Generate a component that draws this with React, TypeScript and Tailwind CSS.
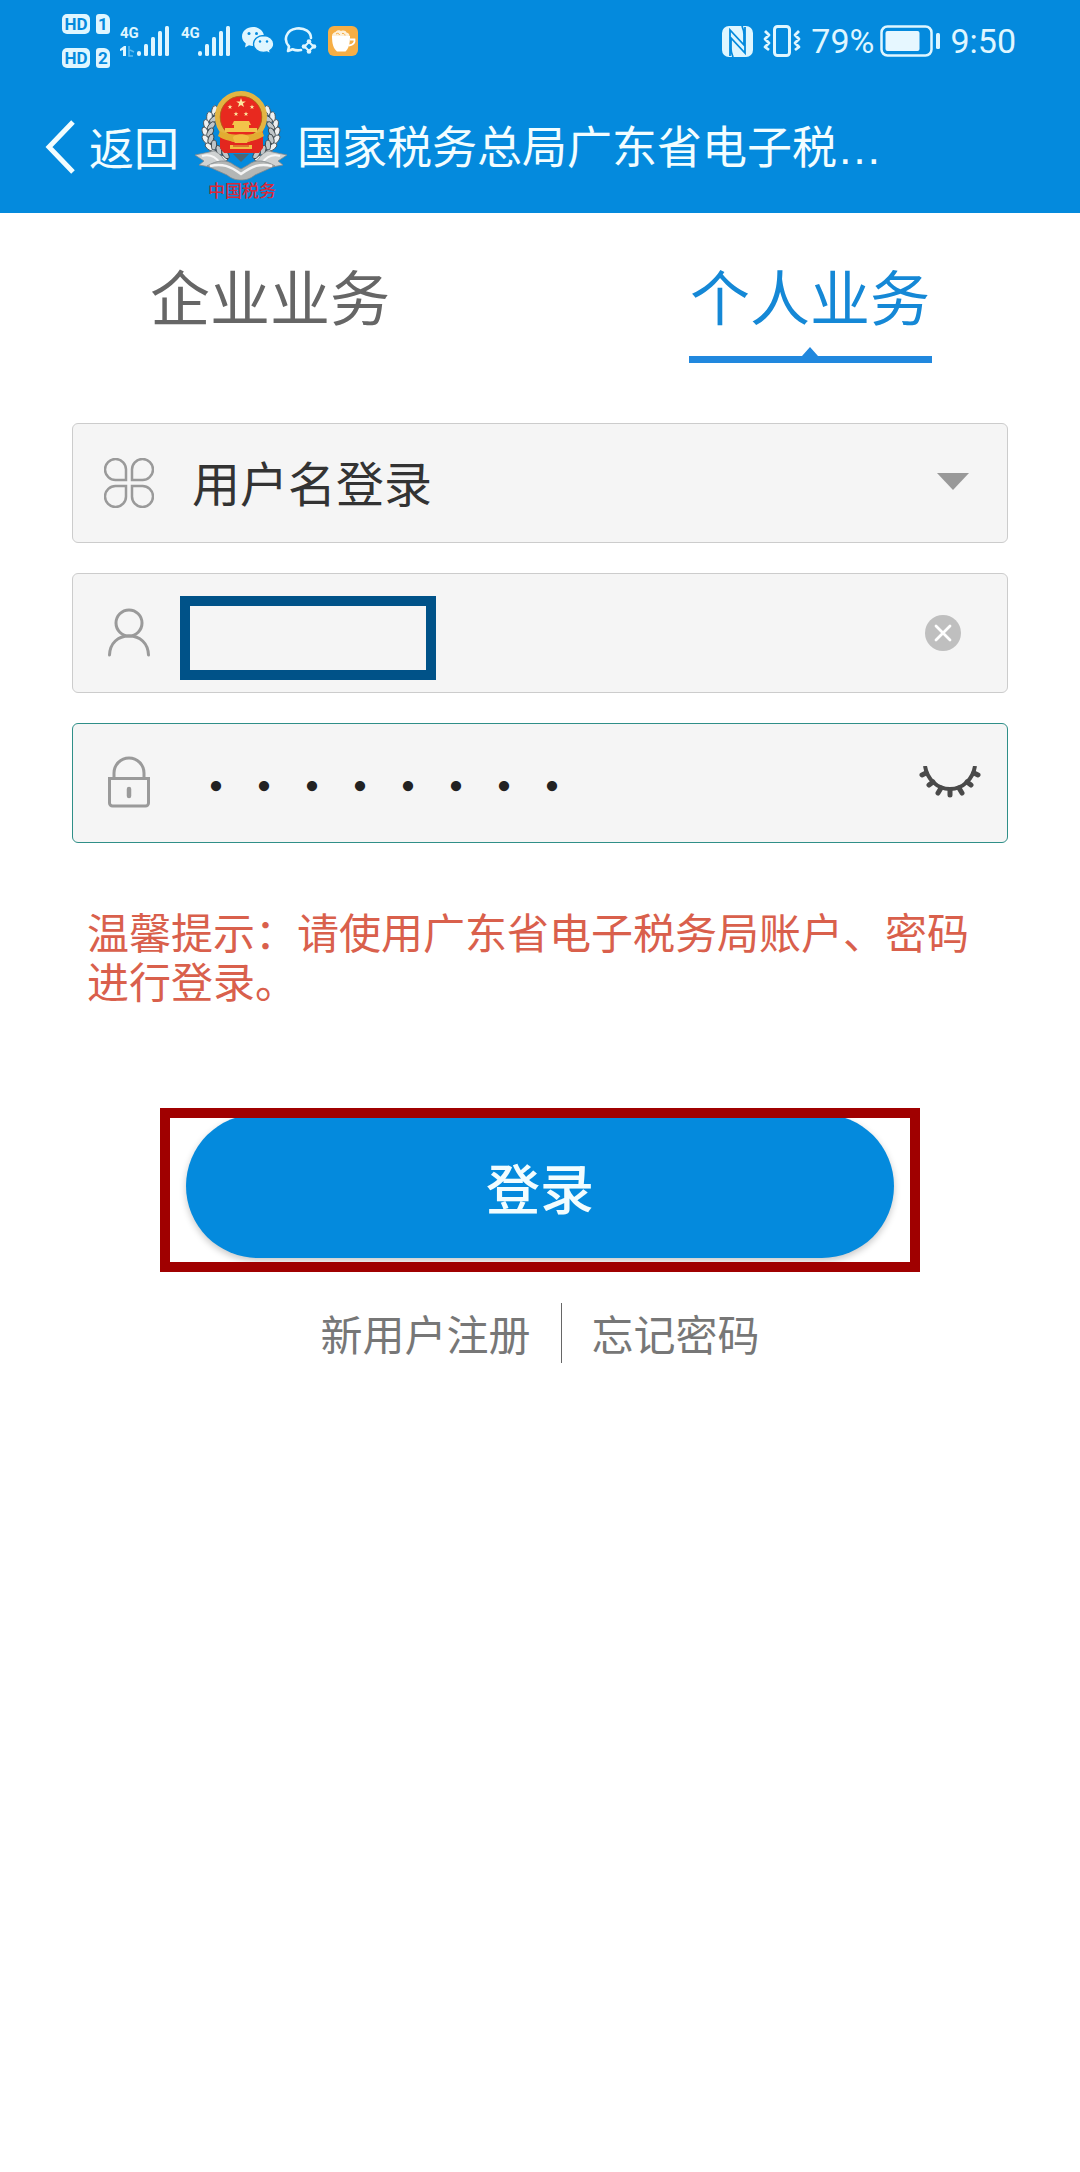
import { useState } from "react";

const sans = "font-['Noto_Sans_CJK_SC',sans-serif]";

function SimBadge({ slot }: { slot: string }) {
  return (
    <span className="flex gap-1.5 font-[Roboto,sans-serif] text-[17px] font-bold leading-5 text-[#048add]">
      <span className="w-7 rounded-[5px] bg-[#dff6ff] text-center">HD</span>
      <span className="w-3.5 rounded-[3px] rounded-tr-[6px] bg-[#dff6ff] text-center">{slot}</span>
    </span>
  );
}

function Signal({ sub }: { sub?: boolean }) {
  return (
    <svg width="51" height="44" viewBox="0 -7 51 44" fill="#dff6ff" aria-hidden="true">
      <text x="0" y="12" fontSize="15" fontWeight="700" fontFamily="Roboto, sans-serif">4G</text>
      {sub && (
        <g>
          <path d="M0 23 4 20h2v10H3v-6l-3 1z" />
          <path d="M9 20v10h4M10 24l4 2" fill="none" stroke="#5db9ee" strokeWidth="1.500" />
        </g>
      )}
      <rect x="17" y="25" width="4" height="5" rx="2" />
      <rect x="24" y="18" width="4" height="12" rx="1.500" />
      <rect x="31" y="11" width="4" height="19" rx="1.500" />
      <rect x="38" y="5" width="4" height="25" rx="1.500" />
      <rect x="45" y="0" width="4" height="30" rx="1.500" />
    </svg>
  );
}

function WechatIcon() {
  return (
    <svg width="32" height="28" viewBox="0 0 32 28" aria-hidden="true">
      <path d="M11 0C5 0 0 4 0 9.500c0 3 1.500 5.300 3.800 7L3 20.500l4-2.200c1.300.4 2.600.6 4 .6 6 0 11-4.200 11-9.400S17 0 11 0z" fill="#dff6ff" />
      <path d="M21.500 8.500c-5.500 0-10 3.700-10 8.500s4.500 8.400 10 8.400c1.200 0 2.400-.2 3.500-.5l3.500 2-.7-3.400c2.500-1.500 4-3.800 4-6.500 0-4.800-4.600-8.500-10.300-8.500z" fill="#dff6ff" stroke="#048add" strokeWidth="1.300" />
      <g fill="#048add">
        <circle cx="7" cy="6.500" r="1.500" /><circle cx="14.500" cy="6.500" r="1.500" />
        <circle cx="18" cy="14.500" r="1.200" /><circle cx="25" cy="14.500" r="1.200" />
      </g>
    </svg>
  );
}

function ChatIcon() {
  return (
    <svg width="34" height="28" viewBox="0 0 34 28" fill="none" stroke="#dff6ff" strokeWidth="2.600" strokeLinejoin="round" strokeLinecap="round" aria-hidden="true">
      <path d="M17 23c-3 .8-6 .3-8.500-.8L4 24l1-4.500C-1 13 2 3 12.500 1.500 21 .5 27 5 27 11" />
      <path d="m25 15-4.500 4.500L25 24l4.500-4.500z" strokeWidth="2" />
      <g fill="#dff6ff" stroke="none">
        <circle cx="25" cy="14.500" r="2.300" /><circle cx="25" cy="24.500" r="2.300" />
        <circle cx="20" cy="19.500" r="2.300" /><circle cx="30" cy="19.500" r="2.300" />
      </g>
    </svg>
  );
}

function CupIcon() {
  return (
    <svg width="30" height="30" viewBox="0 0 30 30" aria-hidden="true">
      <rect width="30" height="30" rx="6" fill="#f6ae45" />
      <path d="M4 10h18c0 8-1.500 12.500-4.500 15.500H9C5.500 22.500 4 18 4 10z" fill="#fff" />
      <path d="M22 13.500h4.500c.5 3-1 5.500-5.500 6" fill="none" stroke="#fff" strokeWidth="1.800" />
      <path d="M4 10c0-2 1.500-3.500 3.500-4C9 3.500 12 4 13 5c3-1 5 0 5.500 1.500 2 .5 3 1.500 3 3.500z" fill="#fdf0da" />
      <path d="M8 8c2-1.500 3-.5 3.500 1M14 7.500c1.500-.5 3 .5 3 2" fill="none" stroke="#f6ae45" />
    </svg>
  );
}

function NfcIcon() {
  return (
    <svg width="31" height="31" viewBox="0 0 31 31" aria-hidden="true">
      <rect width="31" height="31" rx="7" fill="#dff6ff" />
      <path d="M8 30V4l14 15V8c0-3-1-5.500-2-8M23 1v26L9 12v11c0 3 1 5 2 8" fill="none" stroke="#048add" strokeWidth="1.800" />
    </svg>
  );
}

function VibrateIcon() {
  return (
    <svg width="38" height="32" viewBox="0 0 38 32" fill="none" stroke="#dff6ff" strokeLinejoin="round" aria-hidden="true">
      <rect x="11.500" y="1.500" width="15" height="29" rx="3" strokeWidth="3" />
      <path d="m2 6 4 4-4 4 4 4-4 4 4 3M36 6l-4 4 4 4-4 4 4 4-4 3" strokeWidth="2.800" />
    </svg>
  );
}

function BatteryIcon() {
  return (
    <svg width="60" height="32" viewBox="0 0 60 32" aria-hidden="true">
      <rect x="1.500" y="1.500" width="50" height="29" rx="6" fill="none" stroke="#dff6ff" strokeWidth="2.500" />
      <rect x="5.500" y="6" width="34" height="20" rx="2" fill="#e6f7ff" />
      <rect x="56" y="8" width="4" height="16" rx="1.500" fill="#dff6ff" />
    </svg>
  );
}

const star = "M0-5 1.200-1.600H4.800L1.900.6 3 4 0 1.900-3 4-1.900.6-4.800-1.600H-1.200z";
const leaves = [
  [22, 22, 35], [17, 28, 28], [14, 35, 14], [12.500, 42, 4], [13, 49, -8], [16, 56, -24], [21, 62, -40], [28, 67, -58],
];

function Emblem() {
  const half = leaves.map(([x, y, a]) => (
    <g key={y} transform={`translate(${x} ${y}) rotate(${a})`}>
      <ellipse cx="-2.500" rx="2.800" ry="5" transform="rotate(-25)" fill="#eef1f2" stroke="#4b5358" strokeWidth=".9" />
      <ellipse cx="3" rx="2.600" ry="5" transform="rotate(25)" fill="#bfc6c9" stroke="#3c4448" strokeWidth=".9" />
    </g>
  ));
  return (
    <svg width="92" height="116" viewBox="0 0 92 116" role="img" aria-label="中国税务">
      {half}
      <g transform="translate(92 0) scale(-1 1)">{half}</g>
      <path d="M25 42h43v17l-4 5H29l-4-5z" fill="#e3271f" />
      <circle cx="46" cy="28" r="23.500" fill="#e8291f" stroke="#e3b542" strokeWidth="5" />
      <circle cx="46" cy="28" r="20.800" fill="none" stroke="#a86a17" strokeWidth=".8" />
      <g fill="#fde9a0">
        <path d={star} transform="translate(46 14)" />
        <path d={star} transform="translate(35 18) scale(.5)" />
        <path d={star} transform="translate(57 18) scale(.5)" />
        <path d={star} transform="translate(41 25) scale(.5)" />
        <path d={star} transform="translate(51 25) scale(.5)" />
      </g>
      <path d="M39 32h15l2 4h-2v3h8v4H30v-4h9v-3h-2z" fill="#f3c34a" />
      <path d="M25 42c8 5 34 5 42 0l2 5c-6 4-14 6-23 6s-17-2-23-6z" fill="#e3ac31" />
      <path d="M38 49c0-5 16-5 16 0l-2 5H40z" fill="#f0bd42" />
      <path d="M35 56h22v4H35z" fill="#f0bd42" />
      <path d="M38 57h16" stroke="#d2441f" strokeWidth="1.200" />
      <path d="m38 65 8 8 8-8z" fill="#4d6675" />
      <path d="M0 66 19 62c8 3 8 8 14 12l-18 4-11-2 5-4zM92 66l-19-4c-8 3-8 8-14 12l18 4 11-2-5-4z" fill="#cfd2d2" stroke="#84898b" strokeWidth=".8" />
      <path d="M7 67c7-2 13 0 18 7M85 67c-7-2-13 0-18 7" fill="none" stroke="#f7f7f7" strokeWidth="2" />
      <path d="M12 77c10-6 20-7 27-1l7 4 7-4c7-6 17-5 27 1L60 86c-5 4-9 5-14 5s-9-1-14-5z" fill="#b3b6b5" stroke="#81888a" strokeWidth=".8" />
      <path d="M15 77c12-3 20 0 31 8 11-8 19-11 31-8" fill="none" stroke="#f4f4f4" strokeWidth="2.500" />
      <text x="13" y="108" fontSize="17" fontWeight="500" fill="#d8293a" fontFamily="'Noto Sans CJK SC', sans-serif">中国税务</text>
    </svg>
  );
}

function CloverIcon() {
  return (
    <svg width="50" height="50" viewBox="0 0 50 50" fill="none" stroke="#9a9a9a" strokeWidth="2.500" aria-hidden="true">
      {[0, 90, 180, 270].map((a) => (
        <path key={a} d="M22 22H12A10.500 10.500 0 1 1 22 12z" transform={`rotate(${a} 25 25)`} />
      ))}
    </svg>
  );
}

function UserIcon() {
  return (
    <svg width="50" height="50" viewBox="0 0 50 50" fill="none" stroke="#9a9a9a" strokeWidth="3" strokeLinecap="round" aria-hidden="true">
      <circle cx="25" cy="15" r="13" />
      <path d="M5.500 47C6 35 14 28 25 28s19 7 19.500 19" />
    </svg>
  );
}

function LockIcon() {
  return (
    <svg width="50" height="54" viewBox="0 0 50 54" fill="none" stroke="#9a9a9a" strokeWidth="3" aria-hidden="true">
      <path d="M10 22v-5a15 15 0 0 1 30 0v5" />
      <path d="M5.500 22.500h39V47a3 3 0 0 1-3 3h-33a3 3 0 0 1-3-3z" />
      <path d="M25 33v7" strokeWidth="4.500" strokeLinecap="round" />
    </svg>
  );
}

function ClosedEyeIcon() {
  return (
    <svg width="62" height="34" viewBox="0 0 62 34" fill="none" stroke="#4a4a4a" aria-hidden="true">
      <path d="M6 0c2 13 12 23 25 23S54 13 56 0" strokeWidth="4" />
      <path d="m7 7-4 2M14 16l-4 3M22 22l-3 5M31 24v5M40 22l3 5M48 16l4 3M55 7l4 2" strokeWidth="5" strokeLinecap="round" />
    </svg>
  );
}

const fieldBox = "relative flex h-[120px] items-center rounded-md border bg-[#f5f5f5] pl-[31px] pr-[26px]";

export default function App() {
  const [tab, setTab] = useState(1);
  const [user, setUser] = useState("");
  const [password, setPassword] = useState("12345678");
  const [shown, setShown] = useState(false);

  return (
    <div className={`min-h-screen bg-white ${sans}`}>
      <header className="bg-[#048add] text-[#f2fdff]">
        <div className="flex h-20 items-center justify-between pl-[62px] pr-16 pt-0.5 text-[#dff6ff]">
          <div className="flex items-center gap-2.5">
            <div className="flex flex-col gap-3.5">
              <SimBadge slot="1" />
              <SimBadge slot="2" />
            </div>
            <Signal sub />
            <Signal />
            <WechatIcon />
            <ChatIcon />
            <CupIcon />
          </div>
          <div className="flex items-center gap-2.5 font-[Roboto,sans-serif] text-[34px] leading-10">
            <NfcIcon />
            <VibrateIcon />
            <span className="flex items-center gap-1.5">79%<BatteryIcon /></span>
            <span>9:50</span>
          </div>
        </div>
        <div className="flex h-[133px] items-center pl-[45px] pr-[200px] text-[45px] leading-[60px]">
          <button type="button" className="flex shrink-0 items-center gap-3.5">
            <svg width="30" height="54" viewBox="0 0 30 54" fill="none" stroke="#f2fdff" strokeWidth="5" aria-hidden="true">
              <path d="M28 2 4 27l24 25" />
            </svg>
            <span>返回</span>
          </button>
          <div className="ml-4 shrink-0"><Emblem /></div>
          <h1 className="ml-2.5 whitespace-nowrap">
            国家税务总局广东省电子税<span className="font-['Liberation_Sans',sans-serif]">…</span>
          </h1>
        </div>
      </header>

      <main>
        <div role="tablist" className="grid grid-cols-2">
          {["企业业务", "个人业务"].map((label, i) => (
            <div key={label} className="flex justify-center">
              <button
                type="button"
                role="tab"
                aria-selected={tab === i}
                onClick={() => setTab(i)}
                className={`relative h-[150px] w-[243px] pt-3.5 text-[60px] leading-[90px] ${tab === i ? "text-[#1588d6]" : "text-[#666]"}`}
              >
                {label}
                {tab === i && (
                  <svg className="absolute bottom-0 left-0 w-full" height="16" viewBox="0 0 243 16" fill="#2188de" aria-hidden="true">
                    <path d="M0 9h113l8-9 8 9h114v7H0z" />
                  </svg>
                )}
              </button>
            </div>
          ))}
        </div>

        <form className="mx-[72px] mt-[60px]" onSubmit={(e) => e.preventDefault()}>
          <div className="flex flex-col gap-[30px] text-[48px] text-[#333]">
            <div className={`${fieldBox} border-[#ccc]`}>
              <CloverIcon />
              <select aria-label="登录方式" className="ml-[38px] h-full min-w-0 flex-1 appearance-none bg-transparent pb-1 outline-none">
                <option>用户名登录</option>
              </select>
              <svg className="pointer-events-none absolute right-[38px] top-[49px]" width="32" height="18" viewBox="0 0 32 18" fill="#999" aria-hidden="true">
                <path d="M0 0h32L16 17z" />
              </svg>
            </div>

            <div className={`${fieldBox} border-[#ccc]`}>
              <UserIcon />
              <input
                type="text"
                aria-label="用户名"
                value={user}
                onChange={(e) => setUser(e.target.value)}
                className="ml-[38px] h-full min-w-0 flex-1 bg-transparent outline-none"
              />
              <button type="button" aria-label="清除" onClick={() => setUser("")} className="mr-5">
                <svg width="36" height="36" viewBox="0 0 36 36" aria-hidden="true">
                  <circle cx="18" cy="18" r="18" fill="#bfbfbf" />
                  <path d="m11 11 14 14m0-14L11 25" stroke="#fff" strokeWidth="2.800" strokeLinecap="round" />
                </svg>
              </button>
              <span className="pointer-events-none absolute left-[107px] top-[22px] h-[84px] w-64 border-[10px] border-[#005288]" />
            </div>

            <div className={`${fieldBox} border-[#2f8f88]`}>
              <LockIcon />
              <input
                type={shown ? "text" : "password"}
                aria-label="密码"
                value={password}
                onChange={(e) => setPassword(e.target.value)}
                className="ml-[38px] h-full min-w-0 flex-1 bg-transparent text-[#222] outline-none"
              />
              <button type="button" aria-label="显示密码" onClick={() => setShown(!shown)}>
                <ClosedEyeIcon />
              </button>
            </div>
          </div>

          <p className="mt-[63px] px-[15px] text-[42px] leading-[49px] text-[#d9604c]">
            温馨提示：请使用广东省电子税务局账户、密码进行登录。
          </p>

          <div className="relative mx-[88px] mt-[110px] px-[26px]">
            <button
              type="submit"
              className="h-36 w-full rounded-full bg-[#048add] text-[54px] font-medium text-[#f2fdff] shadow-[0_3px_7px_rgba(0,0,0,0.22)]"
            >
              登录
            </button>
            <span className="pointer-events-none absolute inset-x-0 -top-1.5 h-[164px] border-[10px] border-[#a00000]" />
          </div>

          <div className="mt-[45px] flex h-[60px] items-center justify-center gap-[30px] text-[42px] leading-[60px] text-[#777]">
            <a href="#register">新用户注册</a>
            <span className="h-full w-px bg-[#666]" />
            <a href="#forgot">忘记密码</a>
          </div>
        </form>
      </main>
    </div>
  );
}
